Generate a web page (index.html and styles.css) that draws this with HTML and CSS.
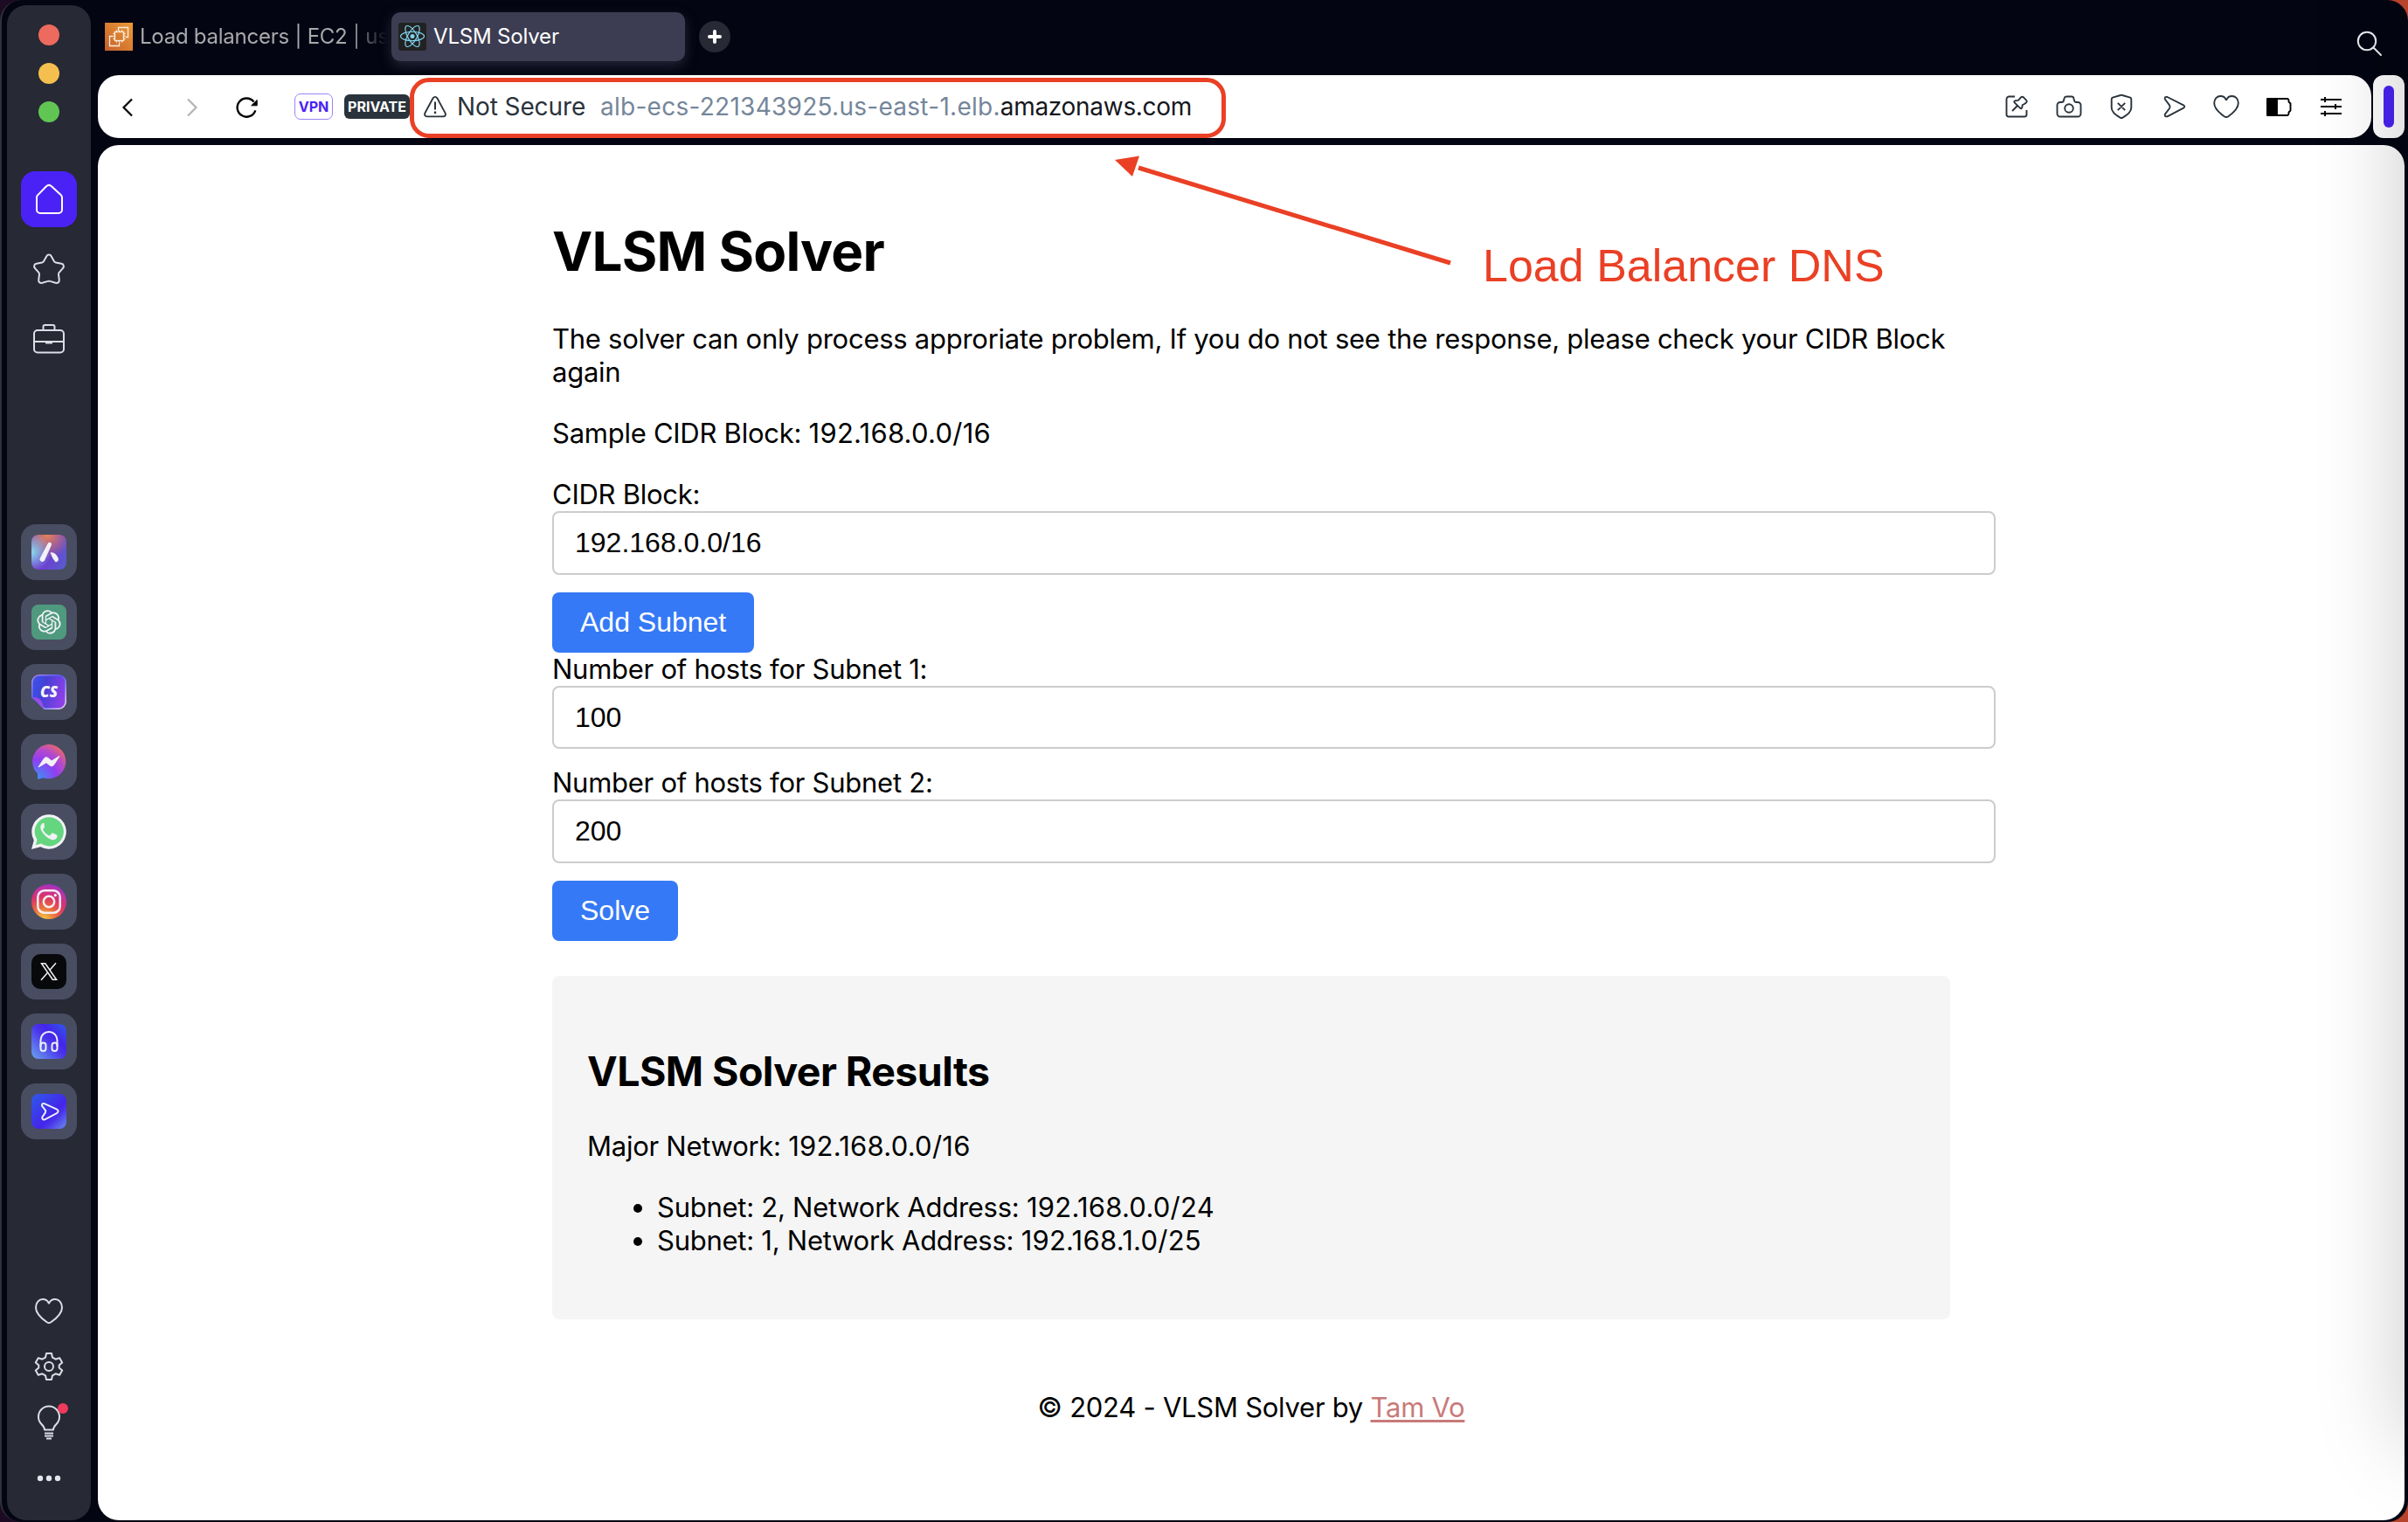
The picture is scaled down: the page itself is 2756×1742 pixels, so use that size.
FILE: index.html
```html
<!DOCTYPE html>
<html lang="en">
<head>
<meta charset="utf-8">
<title>VLSM Solver</title>
<link rel="stylesheet" href="styles.css">
</head>
<body>
<div class="window">
  <nav class="rail">
    <div class="lights"><span class="light red"></span><span class="light amber"></span><span class="light green"></span></div>
    <div class="rail-top">
      <a class="rail-btn active"><svg viewBox="0 0 64 64" class="line"><path d="M29 17.2a4.6 4.6 0 0 1 6 0l10.6 9.9a4 4 0 0 1 1.4 3V44a4 4 0 0 1-4 4H22a4 4 0 0 1-4-4V30.100a4 4 0 0 1 1.400-3z"/></svg></a>
      <a class="rail-btn"><svg viewBox="0 1 64 64" class="line"><path d="M29.300 18.200a3 3 0 0 1 5.400 0l3.200 5.800a3 3 0 0 0 2 1.500l6.500 1.300a3 3 0 0 1 1.700 5l-4.400 5a3 3 0 0 0-.700 2.300l.800 6.600a3 3 0 0 1-4.200 3l-6.300-1.800a4 4 0 0 0-2.600 0L24.400 48.700a3 3 0 0 1-4.200-3l.800-6.600a3 3 0 0 0-.700-2.300l-4.400-5a3 3 0 0 1 1.700-5l6.500-1.300a3 3 0 0 0 2-1.500z"/></svg></a>
      <a class="rail-btn"><svg viewBox="0 0 64 64" class="line"><rect x="15" y="22" width="34" height="25.500" rx="4"/><path d="M25.500 22v-4a2 2 0 0 1 2-2h9a2 2 0 0 1 2 2v4M15 35h34M28 36.500h8"/></svg></a>
    </div>
    <div class="rail-apps">
      <a class="app"><span class="tile aria"><svg viewBox="0 0 40 40"><path d="M19 9.500q1.500-1.500 3.200-.300 1.300 1 .500 3L15 29.500q-2 2.500-4.300.800-2-1.300-.700-3.800zM21.500 20.500q5.500-1.500 9.300 6.500.800 4-3.300 4.300-3.500-3.800-6-10.800z" fill="#f2f2f6"/></svg></span></a>
      <a class="app"><span class="tile gpt"><svg viewBox="0 0 24 24"><path transform="translate(3.800 3.800) scale(.683)" fill="#f2f2f6" d="M22.282 9.821a5.985 5.985 0 0 0-.516-4.910 6.046 6.046 0 0 0-6.510-2.900A6.065 6.065 0 0 0 4.981 4.182a5.985 5.985 0 0 0-3.998 2.900 6.046 6.046 0 0 0 .743 7.097 5.980 5.980 0 0 0 .510 4.911 6.051 6.051 0 0 0 6.515 2.900A5.985 5.985 0 0 0 13.260 24a6.056 6.056 0 0 0 5.772-4.206 5.990 5.990 0 0 0 3.998-2.900 6.056 6.056 0 0 0-.748-7.073zM13.260 22.430a4.476 4.476 0 0 1-2.876-1.040l.141-.081 4.779-2.758a.795.795 0 0 0 .393-.681v-6.737l2.020 1.169a.071.071 0 0 1 .038.052v5.583a4.504 4.504 0 0 1-4.495 4.493zM3.600 18.304a4.470 4.470 0 0 1-.535-3.014l.142.085 4.783 2.759a.771.771 0 0 0 .780 0l5.843-3.369v2.332a.080.080 0 0 1-.033.062L9.740 19.950a4.500 4.500 0 0 1-6.140-1.646zM2.340 7.896a4.485 4.485 0 0 1 2.366-1.973V11.600a.766.766 0 0 0 .388.677l5.815 3.354-2.020 1.169a.076.076 0 0 1-.071 0l-4.830-2.787A4.504 4.504 0 0 1 2.340 7.872zm16.597 3.855l-5.833-3.387L15.119 7.200a.076.076 0 0 1 .071 0l4.830 2.791a4.494 4.494 0 0 1-.676 8.105v-5.678a.790.790 0 0 0-.407-.667zm2.010-3.023l-.141-.085-4.774-2.782a.776.776 0 0 0-.785 0L9.409 9.230V6.897a.066.066 0 0 1 .028-.061l4.830-2.787a4.500 4.500 0 0 1 6.680 4.660zM8.307 12.863l-2.020-1.164a.080.080 0 0 1-.038-.057V6.075a4.500 4.500 0 0 1 7.375-3.453l-.142.080L8.704 5.460a.795.795 0 0 0-.393.681zm1.097-2.365l2.602-1.500 2.607 1.500v2.999l-2.597 1.500-2.607-1.500z"/></svg></span></a>
      <a class="app"><span class="tile">
        <svg viewBox="0 0 40 40"><defs><linearGradient id="csFill" x1="0" y1="0.300" x2="1" y2="0.600"><stop offset="0" stop-color="#3a52e8"/><stop offset=".35" stop-color="#4640d6"/><stop offset="1" stop-color="#9240e8"/></linearGradient><linearGradient id="csEdge" x1="0" y1="0" x2="1" y2="1"><stop offset="0" stop-color="#b58ae6"/><stop offset=".45" stop-color="#4d5cf0"/><stop offset="1" stop-color="#f0e4fb"/></linearGradient></defs><path d="M9 .8h22a8.200 8.200 0 0 1 8.200 8.200v22a8.200 8.200 0 0 1-8.200 8.200H15L.8 26V9A8.200 8.200 0 0 1 9 .8z" fill="url(#csFill)" stroke="url(#csEdge)" stroke-width="1.600"/><path d="M1 26q12-.5 13 13z" fill="#9b4be8"/></svg><span class="cs">CS</span></span></a>
      <a class="app"><span class="tile"><svg viewBox="0 0 40 40"><defs><radialGradient id="msg" cx=".15" cy="1" r="1.150"><stop offset="0" stop-color="#3a94f6"/><stop offset=".5" stop-color="#913df2"/><stop offset=".75" stop-color="#b64bc8"/><stop offset="1" stop-color="#f06a62"/></radialGradient></defs><path d="M20 0a19.600 19.600 0 1 1-6.500 38.200L7 40V33.500A19.500 19.500 0 0 1 20 0z" fill="url(#msg)"/><path d="M8 26l6.500-10q1.800-2.300 4.300-.6l4.300 3.500L32 13.500 25.500 23.600q-1.800 2.400-4.300.6L17 20.800z" fill="#f2f2f6" stroke="#f2f2f6" stroke-linejoin="round"/></svg></span></a>
      <a class="app"><span class="tile"><svg viewBox="0 0 40 40"><path d="M0 40l2.800-10.300A19.800 19.800 0 1 1 10.300 37.200z" fill="#f2f2f6"/><path d="M4.800 35.200l1.700-6.100A16.600 16.600 0 1 1 11 33.600z" fill="#65d67f"/><path d="M14.800 10.500c-.8-.9-2-.6-2.900.4-1.900 2-2.200 4.500-.6 7.600 2.400 4.600 6.400 8.600 11.500 10.500 3.100 1.100 6.400-.8 6.700-3.800.1-.8-.1-1.200-.8-1.600l-4-2c-.8-.4-1.200-.2-1.700.4l-1.500 1.900c-.4.500-.9.600-1.500.3-3.300-1.500-5.300-3.700-6.700-6.400-.3-.5-.1-.9.300-1.300 1.700-1.900 1.600-2.100 1.100-3.300z" fill="#f2f2f6"/></svg></span></a>
      <a class="app"><span class="tile insta"><svg viewBox="0 0 40 40" fill="none" stroke="#f6eef4" stroke-width="2.500"><rect x="7.300" y="7.300" width="25.400" height="25.400" rx="7.500"/><circle cx="20" cy="20" r="6.200"/><circle cx="27.300" cy="12.700" r="1.600" fill="#f6eef4" stroke="none"/></svg></span></a>
      <a class="app"><span class="tile ex"><svg viewBox="0 0 40 40" fill="none" stroke="#f2f2f6" stroke-width="1.500"><path d="M11.500 10.700h4.300L28.600 29.300h-4.300z"/><path d="M28 10.200L20.800 18.500M18.300 21.600L11 29.800"/></svg></span></a>
      <a class="app"><span class="tile phones"><svg viewBox="0 0 40 40" fill="none" stroke="#eceefa" stroke-width="2"><path d="M10.500 26v-7.500a9.500 9.500 0 0 1 19 0V26"/><rect x="10.500" y="21.500" width="6" height="9.500" rx="3"/><rect x="23.500" y="21.500" width="6" height="9.500" rx="3"/></svg></span></a>
      <a class="app"><span class="tile player"><svg viewBox="0 0 40 40" fill="none" stroke="#eceefa" stroke-width="2" stroke-linejoin="round"><path d="M15.300 11.400L29 17.700q3.200 2 0 4.400L15.300 29.300q-3.300.8-3-2.600L15.700 21.600q1-1.600 0-3.200L12 13.600q-.3-3.400 3.300-2.200z"/></svg></span></a>
    </div>
    <div class="rail-bottom">
      <a class="rail-btn"><svg viewBox="0 0 64 64" class="line"><path d="M32 46.200c-1 0-1.700-.4-2.400-.9C22.600 40.400 17 34.800 17 28.500 17 23 20.700 19 25 19c3.300 0 5.500 1.700 6.600 4.200q.4.800.8 0C33.500 20.700 35.700 19 39 19c4.300 0 8 4 8 9.500 0 6.300-5.600 11.900-12.600 16.800-.7.500-1.400.9-2.400.9z"/></svg></a>
      <a class="rail-btn"><svg viewBox="0 0 64 64" class="line"><circle cx="32" cy="32" r="5"/><path d="M29 17h6l1 4.700 3.600 2 4.600-1.500 3 5.200-3.500 3.200v2.800l3.500 3.200-3 5.200-4.600-1.500-3.600 2L35 47h-6l-1-4.700-3.600-2-4.600 1.500-3-5.200 3.500-3.200v-2.800l-3.500-3.200 3-5.200 4.600 1.500 3.600-2z"/></svg></a>
      <a class="rail-btn"><svg viewBox="0 -1 64 64" class="line"><path d="M27 39.500c0-3-1.500-4.500-3.500-6.500a12 12 0 1 1 17 0c-2 2-3.500 3.500-3.500 6.500zM27 43.500h10M27 46.500h10M29 49.500h6"/></svg><span class="badge"></span></a>
      <a class="rail-btn"><svg viewBox="0 0 64 64"><g fill="#e4e5ec"><circle cx="22" cy="32" r="3.200"/><circle cx="32" cy="32" r="3.200"/><circle cx="42" cy="32" r="3.200"/></g></svg></a>
    </div>
  </nav>

  <div class="main">
    <header class="tabs">
      <div class="tab idle">
        <svg class="favicon" viewBox="0 0 32 32"><defs><linearGradient id="ec2" x1="0" y1="1" x2="1" y2="0"><stop offset="0" stop-color="#c4602d"/><stop offset="1" stop-color="#ee9b35"/></linearGradient></defs><rect width="32" height="32" fill="url(#ec2)"/><g fill="none" stroke="#fbeee0" stroke-width="1.300"><rect x="11.500" y="10.500" width="10" height="10"/><path d="M15.500 9V5.500h11v11H24M9 15.500H5.500v11h11V23M13.500 8.500v2M16.500 8.500v2M19.500 8.500v2M13.500 20.500v2M16.500 20.500v2M19.500 20.500v2M9.500 12.500h2M9.500 15.500h2M9.500 18.500h2M21.500 12.500h2M21.500 15.500h2M21.500 18.500h2"/></g></svg>
        <span class="tab-title">Load balancers | EC2 | us</span>
      </div>
      <div class="tab current">
        <svg class="favicon" viewBox="0 0 32 32"><rect width="32" height="32" rx="3" fill="#222"/><circle cx="16" cy="15.500" r="2.500" fill="#7fd3ee"/><g fill="none" stroke="#7fd3ee" stroke-width="1.200"><ellipse cx="16" cy="15.500" rx="13.500" ry="5.200"/><ellipse cx="16" cy="15.500" rx="13.500" ry="5.200" transform="rotate(60 16 15.500)"/><ellipse cx="16" cy="15.500" rx="13.500" ry="5.200" transform="rotate(120 16 15.500)"/></g></svg>
        <span class="tab-title">VLSM Solver</span>
      </div>
      <span class="new-tab"><svg viewBox="0 0 36 36"><path d="M18 12v12M12 18h12" stroke="#fff" stroke-width="4" stroke-linecap="round"/></svg></span>
      <svg class="search" viewBox="0 0 32 32" fill="none" stroke="#eceef4" stroke-width="2" stroke-linecap="round"><circle cx="13" cy="13" r="10.200"/><path d="M20.500 20.500l8.500 8.500"/></svg>
    </header>

    <div class="bar-row">
      <div class="address">
        <svg class="nav-icon" viewBox="0 0 40 40"><path d="M25 10.500L15.500 20 25 29.500" fill="none" stroke="#000" stroke-width="2.200"/></svg>
        <svg class="nav-icon" viewBox="0 0 40 40"><path d="M15 10.500L24.500 20 15 29.500" fill="none" stroke="#b4b4b4" stroke-width="2.200"/></svg>
        <svg class="nav-icon reload" viewBox="0 0 40 40"><path d="M30.300 23.300A10.600 10.600 0 1 1 28.500 13.500" fill="none" stroke="#000" stroke-width="2.300"/><path d="M32.200 11.500v6.300h-6.500z" stroke="#000" stroke-width="1"/></svg>
        <span class="chip vpn">VPN</span>
        <span class="chip private">PRIVATE</span>
        <svg class="warn" viewBox="0 0 28 28" fill="none" stroke="#2a333b" stroke-width="1.900"><path d="M11.600 4.400q2.400-3 4.800 0l9.200 17q1.200 3.800-2.600 4H5q-3.800-.2-2.600-4z"/><path d="M14 8.500v9" stroke-width="2"/><path d="M14 19.500v2.600" stroke-width="2.400"/></svg>
        <span class="insecure">Not Secure</span>
        <span class="url"><span class="sub">alb-ecs-221343925.us-east-1.elb.</span><span class="host">amazonaws.com</span></span>
        <div class="tools">
          <svg viewBox="0 0 36 36" class="tool"><path d="M16 6.500H9.500a3 3 0 0 0-3 3V27a2.500 2.500 0 0 0 2.500 2.500h18a2.500 2.500 0 0 0 2.500-2.500v-5"/><path d="M21.500 9.200l1.800-2q1.200-1 2.400 0l3.600 3.600q1 1.200 0 2.400L27 15l-2.200 1-.6 3.300q-.6 1.800-2 .6l-6.600-6.600q-1-1.500.8-2l3.300-.4zM18.500 17.500L13 23"/></svg>
          <svg viewBox="0 0 36 36" class="tool"><path d="M8 13h2q1.700-.2 2-2l.6-2.500q.5-2 2.400-2h6q2 0 2.400 2L24 11q.4 1.800 2 2h2a3.500 3.500 0 0 1 3.500 3.500V26a3.500 3.500 0 0 1-3.500 3.500H8A3.500 3.500 0 0 1 4.500 26v-9.500A3.500 3.500 0 0 1 8 13z"/><circle cx="18" cy="20" r="4.800"/></svg>
          <svg viewBox="0 0 36 36" class="tool"><path d="M17 5q1-.5 2 0l9 2.700q1.300.5 1.300 2v9.600q0 6-10.300 11.500-1 .5-2 0Q6.700 25.300 6.700 19.300V9.700q0-1.500 1.300-2zM13.800 13.800l8.400 8.400M22.200 13.800l-8.400 8.400"/></svg>
          <svg viewBox="-1 0 36 36" class="tool"><path d="M9.500 7L28 16.300q2.500 1.700 0 3.400L9.500 29.300q-3.300.7-2.700-2.500L12 20q1.200-2 0-3.600L6.800 9.500Q6.200 6.300 9.500 7z"/></svg>
          <svg viewBox="0 0 36 36" class="tool"><path d="M18 30c-1 0-1.700-.4-2.300-.8C9 24.500 4.200 20 4.200 14 4.200 9 7.500 6 11.500 6c3 0 5 1.500 6 3.900q.5.900 1 0C19.500 7.500 21.500 6 24.500 6c4 0 7.300 3 7.300 8 0 6-4.800 10.500-11.500 15.200-.6.400-1.300.8-2.300.8z"/></svg>
          <svg viewBox="0 0 36 36" class="tool black"><path d="M7 9h21q1.500.2 1.500 2v1.500l2 2v8l-2 2V26q0 1.500-1.500 2H7q-2 0-2-2V11q0-2 2-2z"/><path d="M5 9h11v19H5z" fill="#000"/></svg>
          <svg viewBox="0 0 36 36" class="tool black"><path d="M6 10h24M6 18h24M6 26h24M11 7v6M23 15v6M11 23v6"/></svg>
        </div>
        <span class="mark"></span>
      </div>
      <div class="handle"><span></span></div>
    </div>

    <section class="page">
      <main class="solver">
        <h1>VLSM Solver</h1>
        <p>The solver can only process approriate problem, If you do not see the response, please check your CIDR Block<br>again</p>
        <p>Sample CIDR Block: <span class="num">192.168.0.0/16</span></p>
        <label>CIDR Block:</label>
        <div class="field">192.168.0.0/16</div>
        <button>Add Subnet</button>
        <label>Number of hosts for Subnet 1:</label>
        <div class="field">100</div>
        <label>Number of hosts for Subnet 2:</label>
        <div class="field">200</div>
        <button>Solve</button>
        <div class="results">
          <h2>VLSM Solver Results</h2>
          <p>Major Network: <span class="num">192.168.0.0/16</span></p>
          <ul>
            <li>Subnet: 2, Network Address: <span class="num">192.168.0.0/24</span></li>
            <li>Subnet: 1, Network Address: <span class="num">192.168.1.0/25</span></li>
          </ul>
        </div>
        <footer>© 2024 - VLSM Solver by <a>Tam Vo</a></footer>
      </main>
      <svg class="arrow" viewBox="0 0 400 140"><path d="M27 12L384 121" stroke="#ea4025" stroke-width="5"/><path d="M0 3L28 -1.500 20 22z" fill="#ea4025"/></svg>
      <span class="note">Load Balancer DNS</span>
    </section>
  </div>
  <div class="edge-shade"></div>
</div>
</body>
</html>
```
FILE: styles.css
```css
* { box-sizing: border-box; }
html, body { margin: 0; height: 100%; }
body {
  background: linear-gradient(90deg, #1c0b22 0 50%, #b8432c 50%);
  font-family: Inter, "Liberation Sans", sans-serif;
  overflow: hidden;
}
svg { display: block; }

.window {
  position: relative;
  display: flex;
  gap: 8px;
  width: 2756px;
  height: 1742px;
  padding: 6px 4px 2px 6px;
  background: #030512;
  border-left: 2px solid #30323b;
  border-radius: 24px;
  overflow: hidden;
}

/* sidebar */
.rail {
  display: flex;
  flex-direction: column;
  align-items: center;
  width: 96px;
  height: 1734px;
  flex: none;
  background: #272935;
  border-radius: 22px;
}
.lights { display: flex; flex-direction: column; gap: 20px; padding-top: 22px; }
.light { width: 24px; height: 24px; border-radius: 50%; }
.red { background: #ed6a5e; }
.amber { background: #f5bf4f; }
.green { background: #61c554; }
.rail-top { display: flex; flex-direction: column; gap: 16px; margin-top: 56px; }
.rail-btn { position: relative; width: 64px; height: 64px; border-radius: 16px; }
.rail-btn.active { background: #4a22f5; }
.rail-btn.active .line { stroke: #fff; }
.line { fill: none; stroke: #dcdde6; stroke-width: 2; stroke-linejoin: round; }
.rail-apps { display: flex; flex-direction: column; gap: 16px; margin-top: 180px; }
.app {
  display: flex;
  align-items: center;
  justify-content: center;
  width: 64px;
  height: 64px;
  border-radius: 17px;
  background: #494d61;
}
.tile { position: relative; width: 40px; height: 40px; border-radius: 8px; }
.aria {
  background:
    radial-gradient(circle at 0% 50%, #8adcec 0, #8adcec00 50%),
    radial-gradient(circle at 45% 0%, #e88450 0, #e8845000 60%),
    linear-gradient(115deg, #6f3bd0 45%, #5560cc);
}
.gpt { background: #4f9a7f; }
.cs {
  position: absolute;
  inset: 0;
  font: italic 800 17px/40px "Open Sans", sans-serif;
  text-align: center;
  color: #f2f2f6;
}
.insta {
  border-radius: 50%;
  background: radial-gradient(circle at 35% 100%, #f3c843 0, #ea6a3c 30%, #d9336d 55%, #c333a0 72%, #7a2be8 100%);
}
.ex { background: #08090b; border-radius: 10px; }
.phones { background: linear-gradient(45deg, #6ba4ee 0, #4a35ea 50%, #4425ea 65%, #2f5ae8); }
.player { background: linear-gradient(135deg, #2f5ae8 0, #4425ea 60%, #4a35ea 70%, #6b8fee); }
.rail-bottom { display: flex; flex-direction: column; margin-top: 164px; }
.badge {
  position: absolute;
  left: 42px;
  top: 10px;
  width: 12px;
  height: 12px;
  border-radius: 50%;
  background: #ee3a5c;
}

/* tabs */
.main { flex: 1; display: flex; flex-direction: column; min-width: 0; }
.tabs { display: flex; height: 80px; padding: 8px 24px 0 8px; }
.tab { display: flex; align-items: center; height: 56px; font-size: 24px; line-height: 32px; letter-spacing: -.18px; white-space: nowrap; }
.favicon { width: 32px; height: 32px; flex: none; }
.idle { width: 328px; gap: 8px; color: #a9a9ac; letter-spacing: -.25px; }
.idle .tab-title {
  width: 286px;
  mask-image: linear-gradient(90deg, #000 84%, transparent 99%);
}
.current {
  width: 336px;
  padding-left: 8px;
  gap: 8px;
  border-radius: 10px;
  background: #3c3d52;
  color: #fff;
  box-shadow: 0 5px 14px #3c3d5299;
}
.new-tab { width: 36px; height: 36px; margin: 10px 0 0 16px; border-radius: 50%; background: #272935; }
.search { width: 32px; height: 32px; margin: 20px 0 0 auto; }

/* address bar */
.bar-row { display: flex; gap: 2px; height: 72px; margin-bottom: 8px; }
.address {
  position: relative;
  display: flex;
  align-items: center;
  width: 2602px;
  padding-left: 14px;
  border-radius: 24px;
  background: #fff;
}
.nav-icon { width: 40px; height: 40px; margin: 2px 34px 0 0; }
.reload { margin: 2px 0 0 -12px; }
.chip { display: block; border-radius: 6px; font-weight: 700; font-size: 16px; text-align: center; }
.vpn { width: 44px; height: 30px; margin-left: 35px; border: 1.500px solid #9b84f7; border-radius: 7px; line-height: 28px; color: #4a22f5; }
.private { width: 75px; height: 28px; margin-left: 13px; line-height: 28px; background: #2a333b; color: #fff; }
.warn { width: 28px; height: 28px; margin-left: 15px; }
.insecure { width: 164px; margin-left: 11px; font-size: 28px; letter-spacing: -.1px; color: #2a333b; white-space: nowrap; }
.url { font-size: 28px; white-space: nowrap; }
.sub { color: #75869a; letter-spacing: .27px; }
.host { color: #15171d; letter-spacing: -.3px; }
.tools { display: flex; gap: 24px; margin-left: auto; padding-right: 28px; }
.tool { width: 36px; height: 36px; fill: none; stroke: #2a333b; stroke-width: 1.900; stroke-linejoin: round; }
.tool.black { stroke: #000; }
.mark {
  position: absolute;
  left: 357px;
  top: 3px;
  width: 934px;
  height: 69px;
  border: 5px solid #ea4025;
  border-radius: 22px;
}
.handle {
  display: flex;
  align-items: center;
  justify-content: center;
  width: 36px;
  border-radius: 12px;
  background: #fff;
}
.handle span { width: 12px; height: 48px; border-radius: 6px; background: #4a22f5; }

/* page */
.page {
  position: relative;
  flex: 1;
  display: flex;
  justify-content: center;
  padding-top: 84px;
  background: #fff;
  border-radius: 24px;
  color: #000;
}
.solver { width: 1600px; font-size: 31px; line-height: 38px; letter-spacing: -.26px; white-space: nowrap; }
h1 { margin: 0 0 43px; font-size: 62px; line-height: 76px; font-weight: 700; letter-spacing: -.8px; }
p { margin: 0 0 32px; }
.num { letter-spacing: .25px; }
label { display: block; height: 38px; }
.field {
  width: 1652px;
  height: 72.660px;
  margin-bottom: 20px;
  padding: 0 24px;
  border: 2px solid #ccc;
  border-radius: 8px;
  font: 32px/69px "Liberation Sans", Arial, sans-serif;
  letter-spacing: 0;
}
button {
  display: block;
  height: 69px;
  padding: 0 32px;
  border: 0;
  border-radius: 8px;
  background: #3579f6;
  color: #fff;
  font: 32px/69px "Liberation Sans", Arial, sans-serif;
}
.results {
  height: 393px;
  margin-top: 40px;
  padding: 80px 40px 0;
  border-radius: 8px;
  background: #f5f5f5;
}
h2 { margin: 0 0 38px; font-size: 46.500px; line-height: 58px; font-weight: 700; letter-spacing: -.56px; }
ul { margin: 0; padding-left: 80px; }
footer { margin-top: 82px; text-align: center; }
footer a { color: #c97a7a; text-decoration: underline; text-decoration-thickness: 3px; text-underline-offset: 3px; text-decoration-skip-ink: none; }

/* annotation */
.arrow { position: absolute; left: 1164px; top: 14px; width: 400px; height: 140px; overflow: visible; }
.note {
  position: absolute;
  left: 1585px;
  top: 108px;
  font: 52px/60px "Liberation Sans", Arial, sans-serif;
  color: #ea4025;
  white-space: nowrap;
}

.edge-shade {
  position: absolute;
  left: 2750px;
  top: -60px;
  width: 100px;
  height: 1710px;
  box-shadow: 0 0 100px rgba(0, 0, 0, .22);
}
```
